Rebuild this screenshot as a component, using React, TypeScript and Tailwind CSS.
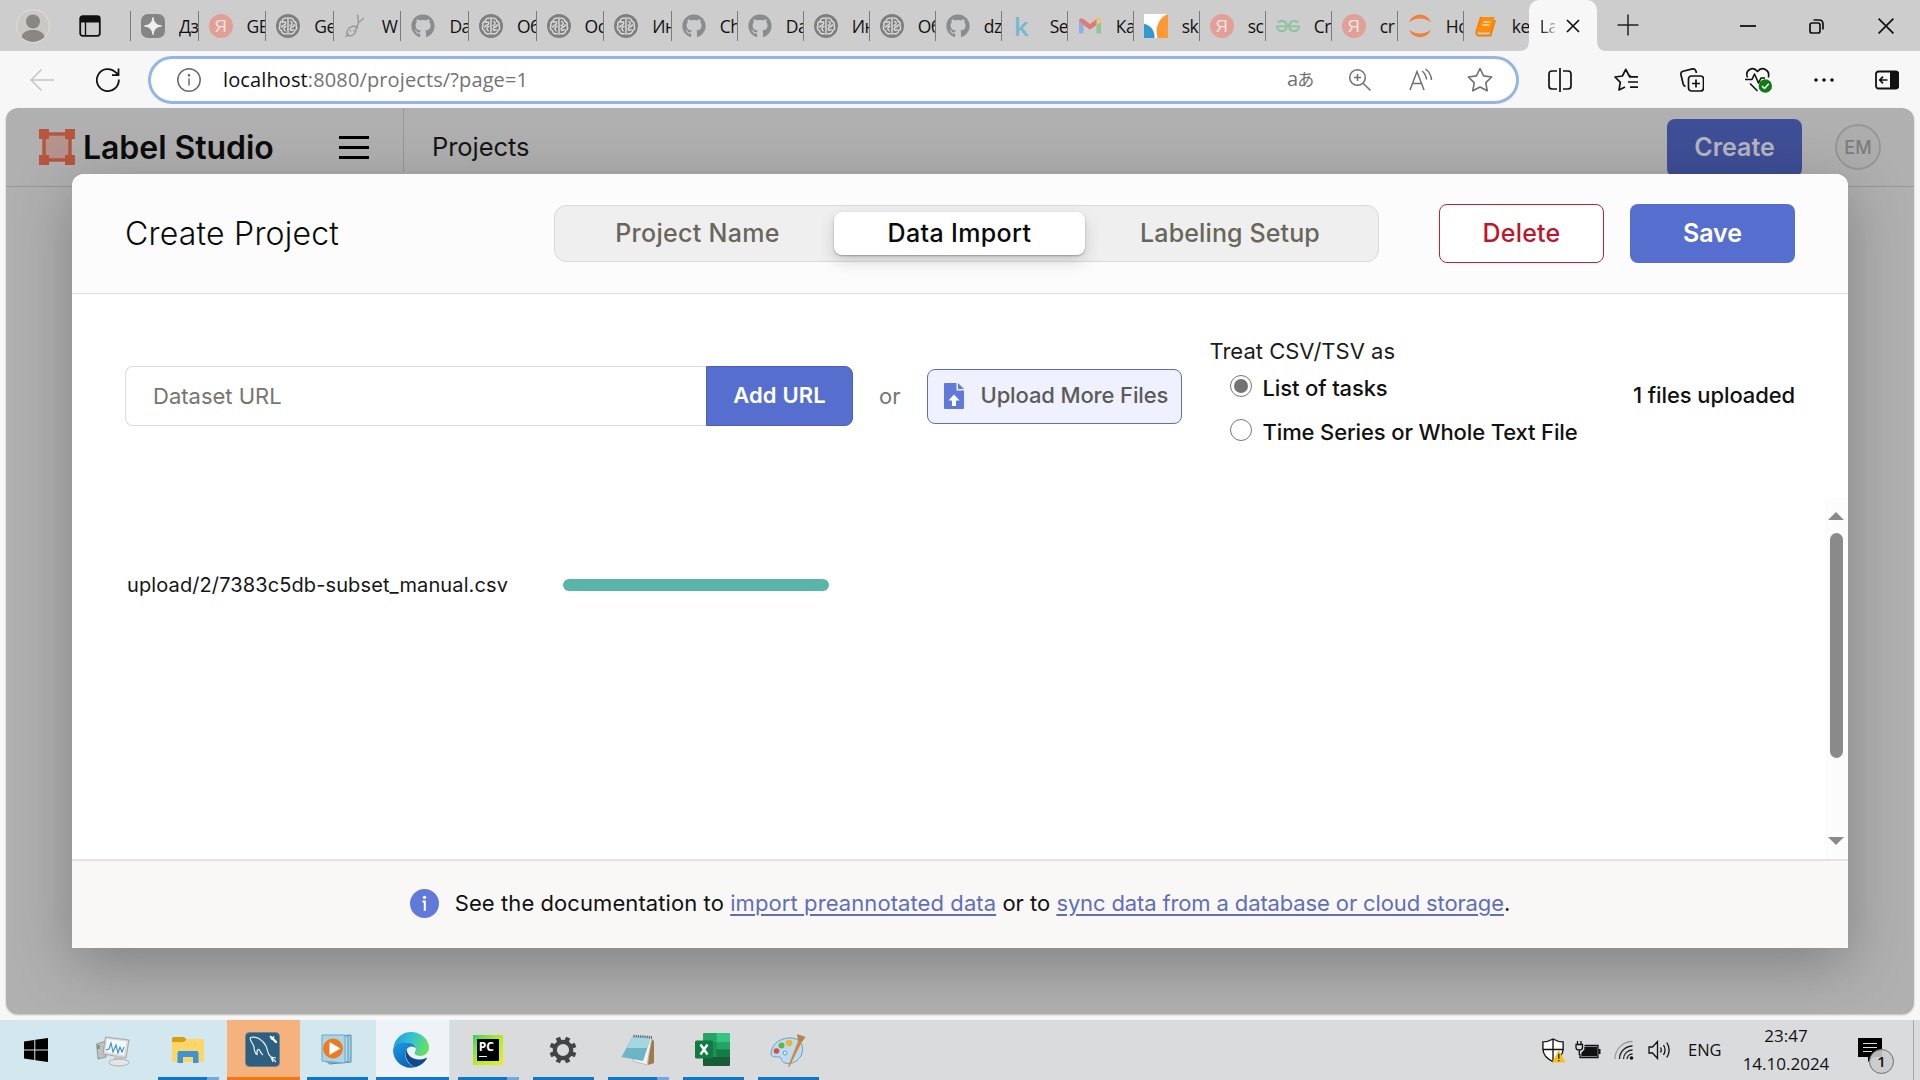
import type { ReactNode } from "react";
import { FaGithub } from "react-icons/fa";
import { SiGeeksforgeeks } from "react-icons/si";

/* ---------- tab favicons ---------- */

const Sparkle = () => (
  <svg viewBox="0 0 24 24" className="size-6">
    <rect width="24" height="24" rx="7" fill="#858585" />
    <path d="M12 3.5Q12.8 11.2 20.5 12Q12.8 12.8 12 20.5Q11.2 12.8 3.5 12Q11.2 11.2 12 3.5Z" fill="#efefef" stroke="#efefef" strokeWidth="1" />
  </svg>
);

const Yandex = () => (
  <div className="flex size-6 items-center justify-center rounded-full bg-[#e0a096] font-['Liberation_Sans'] text-[17px] leading-none text-[#f3e4e1]">
    Я
  </div>
);

const Brain = () => (
  <svg viewBox="0 0 24 24" className="size-6">
    <circle cx="12" cy="12" r="12" fill="#7f7f7f" />
    <g fill="none" stroke="#dedede" strokeWidth="1.4" strokeLinecap="round">
      <path d="M12 3.5V20.5M10.3 4.2C8 3.8 6.4 5 6.2 7C4.3 7.8 3.4 9.6 4 11.6C3 13.6 3.6 15.8 5.4 16.8C5.8 19 7.9 20.3 10.3 19.6" />
      <path d="M13.7 4.2C16 3.8 17.6 5 17.8 7C19.7 7.8 20.6 9.6 20 11.6C21 13.6 20.4 15.8 18.6 16.8C18.2 19 16.1 20.3 13.7 19.6" />
      <path d="M6.8 8.5C8.8 6.6 10.8 8.6 9 10.4C7.4 12 5.8 11.2 5.8 13.2M10 12.5C7.6 12.6 7 15.2 9.2 16.8" />
      <path d="M17.2 15.5C15.2 17.4 13.2 15.4 15 13.6C16.6 12 18.2 12.8 18.2 10.8M14 11.5C16.4 11.4 17 8.8 14.8 7.2" />
    </g>
  </svg>
);

const Needle = () => (
  <svg viewBox="0 0 24 24" className="size-6" fill="none" stroke="#969696" strokeWidth="1.4" strokeLinecap="round">
    <path d="M19.5 4.500L14.500 8.500L13.500 1M14.500 8.500L12.500 14C12 20 8 23 4.500 21.500C1.500 20 3 15.500 6 13.500C9 11.800 12 12 13.500 14M2 22.500L4 20M6.500 16.500V17M10 16.500V17" />
  </svg>
);

const GitHub = () => <FaGithub className="size-6 text-[#8a8c8e]" />;

const Kaggle = () => (
  <div className="flex h-6 w-6 items-center pl-0.5 font-['Open_Sans'] text-[26px] font-semibold leading-none text-[#74b9cf]">k</div>
);

const Gmail = () => (
  <svg viewBox="0 0 24 24" className="size-6">
    <path d="M1 6.5V19.5H5.5V11Z" fill="#8fb0e6" />
    <path d="M23 6.5V19.5H18.5V11Z" fill="#8cc79c" />
    <path d="M1 7C1 4.5 3.6 3.6 5.5 5L12 10L18.5 5C20.4 3.6 23 4.5 23 7L18.5 11L12 15.8L5.5 11Z" fill="#df7d74" />
    <path d="M18.5 5C20.4 3.6 23 4.5 23 7V8L18.5 11.2Z" fill="#eccb6b" />
  </svg>
);

const Sklearn = () => (
  <svg viewBox="0 0 24 24" className="size-6">
    <rect width="24" height="24" fill="#fff" />
    <path d="M0 10C7 11 11 17 10.5 24H0Z" fill="#3499cd" />
    <path d="M24 0V24H13.5C10.5 14 15 3 24 0Z" fill="#ff9933" />
  </svg>
);

const Geeks = () => <SiGeeksforgeeks className="size-6 text-[#8fc3a0]" />;

const Jupyter = () => (
  <svg viewBox="0 0 24 24" className="size-6" fill="#f0813a">
    <path d="M1 8.5C4.5-1.7 19.500-1.700 23 8.500C17 3.300 7 3.300 1 8.500Z" />
    <path d="M1 15.500C4.500 25.700 19.500 25.700 23 15.500C17 20.700 7 20.700 1 15.500Z" />
  </svg>
);

const Book = () => (
  <svg viewBox="0 0 24 24" className="size-6">
    <path d="M7 3H20.500L17 18.500H3.500Z" fill="#ff8c0a" />
    <path d="M7 3L2.500 17.500C2 20 3 21.500 5 21.500H16.500L21 6" fill="none" stroke="#f57f00" strokeWidth="2" />
    <path d="M9.500 8H16.500M8.500 11H15.500" stroke="#ffe0b8" strokeWidth="1.500" />
  </svg>
);

const wideTabs: [() => ReactNode, string][] = [
  [Sparkle, "Дз"],
  [Yandex, "GB"],
  [Brain, "Ge"],
  [Needle, "W"],
  [GitHub, "Da"],
  [Brain, "Об"],
  [Brain, "Ос"],
  [Brain, "Ин"],
];

const narrowTabs: [() => ReactNode, string][] = [
  [GitHub, "Ch"],
  [GitHub, "Da"],
  [Brain, "Ин"],
  [Brain, "Об"],
  [GitHub, "dz"],
  [Kaggle, "Se"],
  [Gmail, "Ка"],
  [Sklearn, "sk"],
  [Yandex, "sc"],
  [Geeks, "Cr"],
  [Yandex, "cr"],
  [Jupyter, "Ho"],
  [Book, "ke"],
];

const TabBody = ({ icon, label }: { icon: ReactNode; label: string }) => (
  <>
    <div className="ml-2.5 shrink-0">{icon}</div>
    <div className="ml-3.5 h-7 min-w-0 flex-1 overflow-hidden whitespace-nowrap text-[17.5px] leading-7 tracking-[-0.5px] text-[#111]">{label}</div>
  </>
);

function TabStrip() {
  return (
    <div className="flex h-[51px] bg-[#cdcdcd]">
      <div className="flex w-[130px] items-center pl-4">
        <svg viewBox="0 0 34 34" className="size-[34px]">
          <circle cx="17" cy="17" r="16.300" fill="#cbc9c5" stroke="#dcdad6" strokeWidth="1.200" />
          <circle cx="17" cy="12.500" r="7" fill="#8a8683" />
          <path d="M5.500 28C7 22.500 12 21 17 21S27 22.500 28.500 28A16 16 0 0 1 5.500 28Z" fill="#8a8683" />
        </svg>
        <svg viewBox="0 0 22 22" className="ml-[29px] size-[22px]">
          <rect x="1.200" y="1.200" width="19.600" height="19.600" rx="2.500" fill="none" stroke="#111" strokeWidth="1.800" />
          <path d="M1 3.500Q1 1 3.500 1H18.500Q21 1 21 3.500V7.500H1Z" fill="#111" />
          <path d="M6.500 7V21" stroke="#111" strokeWidth="1.400" />
        </svg>
      </div>
      {wideTabs.map(([Icon, label], i) => (
        <div key={i} className="mt-[11px] flex h-[30px] w-[67.6px] items-center border-l-[1.5px] border-[#7b7b7b]">
          <TabBody icon={<Icon />} label={label} />
        </div>
      ))}
      {narrowTabs.map(([Icon, label], i) => (
        <div key={i} className="mt-[11px] flex h-[30px] w-[66px] items-center border-l-[1.5px] border-[#7b7b7b]">
          <TabBody icon={<Icon />} label={label} />
        </div>
      ))}
      <div className="relative flex h-full w-[68px] items-center rounded-t-[10px] bg-[#f7f7f7] pl-[11px]">
        <svg viewBox="0 0 10 10" className="absolute -left-2.5 bottom-0 size-2.5"><path d="M10 0V10H0Q10 10 10 0Z" fill="#f7f7f7" /></svg>
        <svg viewBox="0 0 10 10" className="absolute -right-2.5 bottom-0 size-2.5"><path d="M0 0V10H10Q0 10 0 0Z" fill="#f7f7f7" /></svg>
        <div className="h-7 w-[15px] overflow-hidden bg-linear-to-r from-[#111] to-[#bdbdbd] bg-clip-text text-[17.5px] leading-7 tracking-[-0.5px] text-transparent">La</div>
        <svg viewBox="0 0 14 14" className="ml-[11px] size-3.5" stroke="#111" strokeWidth="1.700"><path d="M1 1L13 13M13 1L1 13" /></svg>
      </div>
      <svg viewBox="0 0 22 22" className="ml-5 mt-3.5 size-[22px]" stroke="#222" strokeWidth="1.500"><path d="M0.500 11H21.500M11 0.500V21.500" /></svg>
      <div className="ml-auto flex h-[51px] items-center gap-[53px] pr-[26px]">
        <svg viewBox="0 0 16 16" className="size-4" stroke="#111" strokeWidth="1.800"><path d="M0 8H16" /></svg>
        <svg viewBox="0 0 16 16" className="size-4" fill="none" stroke="#111" strokeWidth="1.700">
          <rect x="1" y="5" width="10" height="10" rx="2" />
          <path d="M4.500 2H10Q14 2 14 6V11.500" />
        </svg>
        <svg viewBox="0 0 16 16" className="size-4" stroke="#111" strokeWidth="1.700"><path d="M0.600 0.600L15.400 15.400M15.400 0.600L0.600 15.400" /></svg>
      </div>
    </div>
  );
}

/* ---------- address bar ---------- */

function Toolbar() {
  return (
    <div className="flex h-[57px] items-center bg-[#f7f7f7] font-['Open_Sans']">
      <svg viewBox="0 0 24 24" className="ml-[30px] size-6" fill="none" stroke="#c4c4c4" strokeWidth="1.500"><path d="M24 12H1M11.500 1.500L1 12L11.500 22.500" /></svg>
      <svg viewBox="0 0 24 24" className="ml-[42px] size-6" fill="none" stroke="#111" strokeWidth="1.800">
        <path d="M22.800 11.500A11 11 0 1 1 19.500 4.200L22.500 7M22.500 0.500V7.200H16" />
      </svg>
      <div className="ml-[28px] flex h-12 w-[1371px] items-center rounded-full border-[3px] border-[#97b4e6] bg-white text-[#707070]">
        <svg viewBox="0 0 24 24" className="ml-[26px] size-6" fill="none" stroke="#6a6a6a" strokeWidth="1.500">
          <circle cx="12" cy="12" r="11.200" />
          <path d="M12 10.500V17.500" />
          <circle cx="12" cy="7.300" r="0.600" fill="#6a6a6a" />
        </svg>
        <div className="ml-[22px] text-[20px] leading-7 tracking-[0.120px] text-[#737373]"><span className="text-[#111]">localhost</span>:8080/projects/?page=1</div>
        <div className="ml-auto flex items-center pr-[23px]">
          <div className="w-[26px] whitespace-nowrap font-['Open_Sans','Noto_Sans_CJK_JP',sans-serif] text-[17px] leading-6 tracking-[-1px]"><span className="text-[20px]">a</span>あ</div>
          <svg viewBox="0 0 24 24" className="ml-[35px] size-6" fill="none" stroke="#707070" strokeWidth="1.500"><circle cx="9.500" cy="9.500" r="7.800" /><path d="M15.200 15.200L22.500 22.500M9.500 6V13M6 9.500H13" /></svg>
          <svg viewBox="0 0 24 24" className="ml-[37px] size-6" fill="none" stroke="#707070" strokeWidth="1.500"><path d="M1 22L8 3.500L15 22M3.500 15.500H12.500M13 3Q17 6 17.500 11.500M16.500 1Q22 5 22.500 12" /></svg>
          <svg viewBox="0 0 26 26" className="ml-[34px] size-[26px]" fill="none" stroke="#707070" strokeWidth="1.600" strokeLinejoin="round"><path d="M13 1.500L16.600 8.900L24.700 10L18.800 15.700L20.200 23.800L13 20L5.800 23.800L7.200 15.700L1.300 10L9.400 8.900Z" /></svg>
        </div>
      </div>
      <svg viewBox="0 0 24 24" className="ml-[29px] size-6" fill="none" stroke="#111" strokeWidth="1.700"><path d="M9 3H4Q1 3 1 6V18Q1 21 4 21H9M15 3H20Q23 3 23 6V18Q23 21 20 21H15M12 0V24" /></svg>
      <svg viewBox="0 0 24 24" className="ml-[42px] size-6" fill="none" stroke="#111" strokeWidth="1.700" strokeLinejoin="round"><path d="M17 8L15.200 8L11.800 1.300L8.400 8L1 9L6.300 14.300L5 22L11 19M15 8.800H24M14 14H24M16 19.200H24" /></svg>
      <svg viewBox="0 0 24 24" className="ml-[42px] size-6" fill="none" stroke="#111" strokeWidth="1.700"><rect x="8.500" y="8" width="15" height="15" rx="3" /><path d="M16 11.500V19.500M12 15.500H20M5.500 18.500Q3.800 18 3.200 16L0.900 6.500Q0.500 4 3 3.300L12.500 0.900Q15 0.500 15.800 2.800L16.500 5" /></svg>
      <svg viewBox="0 0 27 26" className="ml-[41px] h-[26px] w-[27px]" fill="none" stroke="#111" strokeWidth="1.600" strokeLinejoin="round">
        <path d="M2.500 10.500C-0.500 3 8 -1.500 12.500 4.500C17 -1.500 25.500 3 23.300 10.500M0 12.500H7L9.500 7L13.500 16L16 11H20M5 16.500L12.500 24" />
        <circle cx="20.300" cy="19" r="6.700" fill="#127a12" stroke="none" /><path d="M17 19L19.500 21.500L23.800 16.700" stroke="#fff" />
      </svg>
      <svg viewBox="0 0 20 4" className="ml-[42px] h-1 w-5" fill="#111"><circle cx="2" cy="2" r="1.800" /><circle cx="10" cy="2" r="1.800" /><circle cx="18" cy="2" r="1.800" /></svg>
      <svg viewBox="0 0 24 20" className="ml-[41px] h-5 w-6"><rect x="1" y="1.500" width="22" height="17" rx="2.500" fill="none" stroke="#111" strokeWidth="1.800" /><path d="M15 1H21Q24 1 24 4V16Q24 19 21 19H15Z" fill="#111" /><path d="M12.500 10H5M8 6.700L4.800 10L8 13.300" fill="none" stroke="#111" strokeWidth="1.700" /></svg>
    </div>
  );
}

/* ---------- Label Studio ---------- */

function AppHeader() {
  return (
    <div className="flex h-[79px] items-center border-b border-[#969696] pb-[15px]">
      <div className="flex h-[64px] w-[398px] items-center border-r border-[#979797] pl-[33px]">
        <svg viewBox="0 0 36 36" className="mt-[15px] size-9">
          <rect x="5" y="5" width="26" height="26" fill="#b5948e" stroke="#b7553f" strokeWidth="3.500" />
          <g fill="#b7553f"><rect width="10" height="10" /><rect x="26" width="10" height="10" /><rect y="26" width="10" height="10" /><rect x="26" y="26" width="10" height="10" /></g>
        </svg>
        <div className="ml-2 mt-[17px] whitespace-nowrap text-[32px] font-semibold leading-10 tracking-[-0.050px] text-[#0c0c0c]">Label Studio</div>
        <div className="ml-auto mr-[34px] mt-4 flex w-[30px] flex-col gap-[7px]">
          <div className="h-[3px] bg-black" /><div className="h-[3px] bg-black" /><div className="h-[3px] bg-black" />
        </div>
      </div>
      <div className="ml-7 mt-[15px] text-[25.500px] tracking-[-0.050px] text-[#161616]">Projects</div>
      <div className="ml-auto mt-4 flex h-[58px] w-[135px] items-center justify-center rounded-lg bg-[#3f4f97] text-[25px] font-semibold text-[#b4b6bf]">Create</div>
      <div className="ml-[33px] mr-[33px] mt-[15px] flex size-[46px] items-center justify-center rounded-full border-2 border-[#979797] bg-[#adadad] text-[18px] font-medium text-[#7d7d7d]">EM</div>
    </div>
  );
}

const Radio = ({ on, label, tall }: { on?: boolean; label: string; tall: string }) => (
  <div className={"flex items-center pl-[21px] " + tall}>
    <div className="-mt-[5px] flex size-[22px] items-center justify-center rounded-full border-[1.5px] border-[#767676] bg-white">
      {on && <div className="size-[14px] rounded-full bg-[#737373]" />}
    </div>
    <div className="ml-2.5 whitespace-nowrap text-[22px] font-medium tracking-[-0.130px] text-[#111]">{label}</div>
  </div>
);

function Modal() {
  return (
    <div className="flex h-[774px] w-[1776px] flex-col overflow-hidden rounded-t-[12px] bg-white">
      <div className="flex h-[120px] items-center border-b border-[#dcdcdc] bg-[#fcfcfc] px-[53px] text-[25px]">
        <div className="w-[429px] text-[32px] font-light tracking-[0.220px] text-[#0a0a0a]">Create Project</div>
        <div className="flex h-[57px] w-[825px] items-center rounded-[12px] border border-[#dadada] bg-[#efefef] pl-1.5 pr-[3px] font-medium text-[#69665c]">
          <div className="w-[273px] text-center tracking-[0.300px]">Project Name</div>
          <div className="flex h-[43px] w-[251px] items-center justify-center rounded-lg bg-white tracking-[0.350px] text-[#0a0a0a] shadow-[0_1px_2px_rgba(0,0,0,0.3),0_6px_16px_rgba(0,0,0,0.16)]">Data Import</div>
          <div className="flex-1 text-center tracking-[0.120px]">Labeling Setup</div>
        </div>
        <div className="ml-[60px] flex h-[59px] w-[165px] items-center justify-center rounded-lg border border-[#b9243a] bg-white font-medium tracking-[0.200px] text-[#c0142a]">Delete</div>
        <div className="ml-[26px] flex h-[59px] w-[165px] items-center justify-center rounded-lg bg-[#566fcf] font-semibold tracking-[-0.100px] text-white">Save</div>
      </div>

      <div className="flex flex-1 flex-col pt-11">
        <div className="flex h-[116px] items-center px-[53px] text-[22px]">
          <div className="flex h-[60px] w-[728px]">
            <div className="flex flex-1 items-center rounded-l-lg border border-r-0 border-[#dddcd8] pl-[27px] text-[#77756f]">Dataset URL</div>
            <div className="flex w-[147px] items-center justify-center rounded-r-lg border border-[#4a60b8] bg-[#566fcf] pb-0.5 font-semibold tracking-[0.150px] text-white">Add URL</div>
          </div>
          <div className="ml-[26px] text-[#77756f]">or</div>
          <div className="ml-[27px] flex h-[55px] w-[255px] items-center rounded-lg border border-[#5a6fc0] bg-[#eff1ff] pl-4">
            <svg viewBox="0 0 20 26" className="h-[26px] w-5">
              <path d="M0 1Q0 0 1 0H12.500V7.500H20V25Q20 26 19 26H1Q0 26 0 25Z" fill="#617ada" />
              <path d="M14 0L20 6H14Z" fill="#617ada" />
              <path d="M10 11.500L15.500 17.500H12V23H8V17.500H4.500Z" fill="#fff" />
            </svg>
            <div className="ml-4 whitespace-nowrap pb-0.5 font-medium tracking-[-0.130px] text-[#5c5b58]">Upload More Files</div>
          </div>
          <div className="ml-[27px] flex h-[116px] flex-col">
            <div className="h-[27px] leading-[27px] text-[#1c1c1c]">Treat CSV/TSV as</div>
            <Radio on tall="h-[46px]" label="List of tasks" />
            <Radio tall="h-[43px]" label="Time Series or Whole Text File" />
          </div>
          <div className="ml-auto whitespace-nowrap pb-0.5 font-medium tracking-[-0.100px] text-[#111]">1 files uploaded</div>
        </div>

        <div className="mt-11 flex flex-1">
          <div className="flex flex-1 items-start pl-[55px] pt-[67px]">
            <div className="flex h-10 items-center">
              <div className="w-[436px] whitespace-nowrap text-[20px] tracking-[0.110px] text-[#161616]">upload/2/7383c5db-subset_manual.csv</div>
              <div className="h-3 w-[266px] rounded-full bg-[#5ab5a9]" />
            </div>
          </div>
          <div className="flex w-[23px] flex-col items-center bg-[#fcfcfc] pb-3.5 pr-px pt-3.5">
            <svg viewBox="0 0 16 8" className="h-2 w-4"><path d="M0 8L8 0L16 8Z" fill="#8a8a8a" /></svg>
            <div className="mt-[13px] h-[225px] w-[13px] rounded-full bg-[#8a8a8a]" />
            <svg viewBox="0 0 16 8" className="mt-auto h-2 w-4"><path d="M0 0L8 8L16 0Z" fill="#8a8a8a" /></svg>
          </div>
        </div>
      </div>

      <div className="flex h-[89px] items-center justify-center border-t-2 border-[#e4e4e2] bg-[#f9f8f6] pb-0.5 text-[22px] text-[#111]">
        <svg viewBox="0 0 28 28" className="mr-4 size-[29px]">
          <circle cx="14" cy="14" r="14" fill="#617ada" />
          <circle cx="14" cy="8" r="1.600" fill="#fff" />
          <path d="M12 12H14.300V21" fill="none" stroke="#fff" strokeWidth="2" />
        </svg>
        <div className="whitespace-nowrap">
          <span className="tracking-[0.080px]">See the documentation to </span>
          <span className="tracking-[0.090px] text-[#5f6fb8] underline decoration-2 underline-offset-[3px]">import preannotated data</span> or to{" "}
          <span className="tracking-[-0.130px] text-[#5f6fb8] underline decoration-2 underline-offset-[3px]">sync data from a database or cloud storage</span>.
        </div>
      </div>
    </div>
  );
}

/* ---------- taskbar ---------- */

const Task = ({ children, tile = "", bar }: { children: ReactNode; tile?: string; bar?: ReactNode }) => (
  <div className="flex h-[60px] w-[75px] flex-col">
    <div className={"flex h-[60px] w-[73px] flex-col items-center " + tile}>
      <div className="flex h-[57px] items-center justify-center pr-[1.5px] pt-0.5">{children}</div>
      {bar}
    </div>
  </div>
);

const Bar = () => <div className="h-[3px] w-[61px] bg-[#1076cb]" />;
const SplitBar = () => (
  <div className="flex h-[3px] w-[61px]">
    <div className="w-[49px] bg-[#1076cb]" />
    <div className="flex-1 bg-[#70aadf]" />
  </div>
);

function Taskbar() {
  return (
    <div className="flex h-[60px] bg-[#d9dbdd] font-['Open_Sans']">
      <div className="flex h-[60px] w-[450px] bg-[#d2e7ee]">
        <div className="flex w-[72px] shrink-0 items-center justify-center">
          <svg viewBox="0 0 24 24" className="size-6"><path d="M0 3.400L10.300 2V11.500H0ZM11.300 1.800L24 0V11.500H11.300ZM0 12.500H10.300V22L0 20.600ZM11.300 12.500H24V24L11.300 22.200Z" fill="#000" /></svg>
        </div>
        <div className="flex w-[80px] shrink-0 items-center justify-center pl-0.5 pt-0.5">
          <svg viewBox="0 0 34 31" className="h-[31px] w-[34px]">
            <path d="M0.500 8L10 5V21L2 23Z" fill="#bfc1c3" stroke="#888" strokeWidth="0.800" /><rect x="1.500" y="9" width="2" height="4" fill="#49a043" />
            <path d="M9.500 1L33 4L30 22L7 18Z" fill="#d9dbdd" stroke="#999" strokeWidth="0.800" /><path d="M11 3L30.500 5.500L28 19.500L9.500 16Z" fill="#f4f8fb" />
            <path d="M10 14L13 13L15 7L17 16L20 9L22 17L24 11L26 16L28 11" fill="none" stroke="#3b8bc8" strokeWidth="1.100" />
            <path d="M18 20H26L27 25H18Z" fill="#c4c6c8" /><ellipse cx="23" cy="26.500" rx="10" ry="3.500" fill="#e4e5e6" stroke="#a3a5a7" strokeWidth="0.800" />
          </svg>
        </div>
        <div className="flex w-[298px] shrink-0">
          <Task bar={<SplitBar />}>
            <svg viewBox="0 0 32 26" className="h-[26px] w-8">
              <path d="M0 1.500Q0 0 1.500 0H12L15 3V8H0Z" fill="#d79b15" /><path d="M0 5H12L15 2H30.500Q32 2 32 3.500V23.500Q32 25 30.500 25H1.500Q0 25 0 23.500Z" fill="#fcd667" />
              <path d="M5.500 26V16Q5.500 14 7.500 14H24.500Q26.500 14 26.500 16V26H21V20H11V26Z" fill="#3c93d6" />
            </svg>
          </Task>
          <Task tile="bg-[#f6b27c]" bar={<div className="h-[3px] w-[73px] bg-[#f37514]" />}>
            <svg viewBox="0 0 35 35" className="size-[35px]">
              <rect x="0.500" y="0.500" width="34" height="34" rx="4" fill="#2c5f80" stroke="#71838a" />
              <path d="M5.500 5.500C12 4 18 8 21 14C23 18 22 22 26 25L31 30M31 26L26 25L28 30M5.500 5.500C4 8 8 11 9 15C9.500 19 9 21 12 22.500C12 19 12 17 14 17.500C15.500 20 16.500 22 18 23" fill="none" stroke="#e8f1f5" strokeWidth="1.200" />
              <path d="M26.500 5.500L31 10" fill="none" stroke="#fff" strokeWidth="2.400" strokeLinecap="round" />
              <path d="M25 4L27 7L29 4.500" fill="none" stroke="#fff" strokeWidth="1.500" />
            </svg>
          </Task>
          <Task bar={<Bar />}>
            <svg viewBox="0 0 31 31" className="size-[31px]">
              <path d="M8 3L30 1V28L8 30Z" fill="#a4cfe4" stroke="#4c8fb0" /><path d="M5 2H27V28H5Z" fill="#b5dbeb" stroke="#5b9bba" /><path d="M1 1H24V29L1 27Z" fill="#abd5e7" stroke="#6ba9c4" />
              <circle cx="12" cy="14.500" r="10" fill="#ef7a22" /><path d="M8.500 8V21L19.500 14.500Z" fill="#fff" />
            </svg>
          </Task>
          <Task tile="bg-[#edf3f6]" bar={<div className="h-[3px] w-[73px] bg-[#1076cb]" />}>
            <svg viewBox="0 0 36 36" className="size-9">
              <defs>
                <linearGradient id="edgeTop" x1="0" x2="1" y1="0.200" y2="0.500"><stop offset="0" stopColor="#1f9be0" /><stop offset="0.500" stopColor="#35c4cf" /><stop offset="1" stopColor="#66e060" /></linearGradient>
                <linearGradient id="edgeLow" x1="0" x2="0.600" y1="0" y2="1"><stop offset="0" stopColor="#1b9de2" /><stop offset="1" stopColor="#0f62b8" /></linearGradient>
              </defs>
              <path d="M0.500 15.500C2 6 9.500 0 18 0C28 0 36 7.500 36 15.500C36 21 31.500 24 27.500 24C23.500 24 21.500 22.500 21.500 21C21.500 19.800 23 19 23 16.500C22.500 13 18 10.500 13 10.500C7 10.500 2.500 12.500 0.500 15.500Z" fill="url(#edgeTop)" />
              <path d="M0 18C0.500 13 6 9.800 12 10.200C18 10.300 22.500 13 23 16.500C20.500 13 14 14 12.500 20C11 28 17 34 23 35C11 38.500 0 29.500 0 18Z" fill="url(#edgeLow)" />
              <path d="M12.700 19C11 26 17 34.500 23 35C28 33.500 32 30 33.800 26.500C34 25.800 33.500 25.600 33 25.900C25 29.500 15 27 13.500 17.500Z" fill="#114a8b" />
            </svg>
          </Task>
        </div>
      </div>
      <div className="ml-0.5 flex">
        <Task bar={<SplitBar />}>
          <div className="size-[30px] bg-linear-to-br from-[#20d060] via-[#b8ea20] to-[#e8ee20] p-1">
            <div className="flex h-full flex-col bg-black pl-[2px] pt-[1px] text-[12px] font-bold leading-[13px] text-white">PC<div className="mt-[3px] h-px w-2 bg-white" /></div>
          </div>
        </Task>
        <Task bar={<Bar />}>
          <svg viewBox="0 0 28 28" className="size-7">
            <circle cx="14" cy="14" r="8.200" fill="none" stroke="#434446" strokeWidth="4.200" />
            <g stroke="#434446" strokeWidth="4.600">
              <path d="M14 0.500V5M14 23V27.500M0.500 14H5M23 14H27.500" transform="rotate(22.500 14 14)" />
              <path d="M14 0.500V5M14 23V27.500M0.500 14H5M23 14H27.500" transform="rotate(67.500 14 14)" />
            </g>
          </svg>
        </Task>
        <Task bar={<SplitBar />}>
          <svg viewBox="0 0 34 32" className="h-8 w-[34px]">
            <path d="M29 4L33 7V29L27 31Z" fill="#a07b48" /><path d="M13 3L31 4L26 31L12 27Z" fill="#f0f2f3" stroke="#aaa" strokeWidth="0.700" />
            <path d="M12 2L30 3L22 27L0.500 23Z" fill="#6cb5c4" /><path d="M12 2L30 3L26 14L6 14Z" fill="#a5d7e0" />
            <path d="M12.500 2L31 3.300" stroke="#666" strokeWidth="2.500" strokeDasharray="1.200 1" />
          </svg>
        </Task>
        <Task bar={<Bar />}>
          <svg viewBox="0 0 35 33" className="h-[33px] w-[35px]">
            <rect x="8" width="27" height="33" rx="1.500" fill="#1f8f57" /><path d="M8 1.500Q8 0 9.500 0H21.500V9H8Z" fill="#27a366" /><path d="M21.500 0H33.500Q35 0 35 1.500V9H21.500Z" fill="#35c481" />
            <path d="M21.500 9H35V16.500H21.500Z" fill="#23a366" /><path d="M21.500 16.500H35V24H21.500Z" fill="#127c42" /><path d="M8 24H35V31.500Q35 33 33.500 33H9.500Q8 33 8 31.500Z" fill="#185c37" />
            <rect y="7.500" width="18" height="18" rx="1.500" fill="#107c41" /><path d="M5.500 11.500L12.500 21.500M12.500 11.500L5.500 21.500" stroke="#fff" strokeWidth="2.400" />
          </svg>
        </Task>
        <Task bar={<Bar />}>
          <svg viewBox="0 0 36 34" className="h-[34px] w-9">
            <path d="M1 20C2 10 12 4 22 5C31 6 34 13 32 20C30 28 21 32 15 30C10 28.500 13 24.500 9 24C5 23.500 1 25 1 20Z" fill="#bcdcf0" stroke="#6d9cc0" />
            <circle cx="6.500" cy="18" r="2.800" fill="#e04a3f" /><circle cx="11.500" cy="12.500" r="3" fill="#5db648" /><circle cx="19" cy="10" r="3.200" fill="#f2b230" /><circle cx="15" cy="20" r="2" fill="#e4eaee" stroke="#6d9cc0" />
            <path d="M18 33.500L28.500 7L32 8.500L19.500 33.500Z" fill="#d98436" /><path d="M27 1L35.500 4L32 9L28 7.500Z" fill="#b58252" />
          </svg>
        </Task>
      </div>

      <div className="ml-auto flex h-[60px] items-center text-[#111]">
        <svg viewBox="0 0 25 26" className="size-[25px]">
          <path d="M12 1Q17 4 22.500 4V12Q22 20 12 24.500Q2 20 1.500 12V4Q7 4 12 1Z" fill="#fff" stroke="#111" strokeWidth="1.400" /><path d="M12 1V24.500M1.500 12H22.500" stroke="#111" strokeWidth="1.400" />
          <path d="M18 12.500L25 25.500H11Z" fill="#fcbf16" /><path d="M18 16.500V21.500M18 22.800V24.200" stroke="#111" strokeWidth="1.300" />
        </svg>
        <svg viewBox="0 0 26 20" className="ml-[9px] h-5 w-[26px]" fill="none" stroke="#111" strokeWidth="1.300">
          <path d="M9.500 5.500H23V17.500H5V14" /><path d="M10 7.500H21.500V15.500H7V13L10 10Z" fill="#111" /><path d="M24.500 9V14" strokeWidth="2" /><path d="M2.500 1V4M6 1V4M1 4.500H7.500V7.500Q7.500 10 4.300 10Q1 10 1 7.500ZM4.300 10V15" />
        </svg>
        <svg viewBox="0 0 20 20" className="ml-[13px] size-5" fill="none" strokeWidth="1.300">
          <path d="M1 19A17.500 17.500 0 0 1 18.500 1.500" stroke="#9a9a9a" /><path d="M5.500 19A13 13 0 0 1 18.500 6M9.500 19A9 9 0 0 1 18.500 10M13 19A5.500 5.500 0 0 1 18.500 14" stroke="#222" /><circle cx="17.500" cy="18" r="1.800" fill="#111" />
        </svg>
        <svg viewBox="0 0 24 20" className="ml-[14px] h-5 w-6" fill="none" stroke="#111" strokeWidth="1.300"><path d="M1 7H4.500L9.500 1.500V18.500L4.500 13H1ZM12.500 7.500Q14 10 12.500 12.500M15.500 5Q18.500 10 15.500 15M18.800 2.500Q23.500 10 18.800 17.500" /></svg>
        <div className="ml-4 w-[34px] whitespace-nowrap text-[16.500px]">ENG</div>
        <div className="ml-[20px] flex w-[88px] flex-col items-center text-[17px] leading-7"><div>23:47</div><div>14.10.2024</div></div>
        <div className="relative ml-[28px] h-[60px] w-[55px]">
          <svg viewBox="0 0 24 24" className="mt-[18px] size-6"><path d="M0 0H24V19H15L10 24V19H0Z" fill="#000" /><path d="M5 5.500H19M5 9.500H19M5 13.500H14" stroke="#ddd" strokeWidth="1.200" /></svg>
          <div className="absolute left-[11px] top-[29px] flex size-[25px] items-center justify-center rounded-full border border-[#707070] bg-[#c9cbcd]/90 text-[15px] font-semibold leading-none">1</div>
        </div>
        <div className="mr-1.5 h-[60px] w-px bg-[#a5a7a8]" />
      </div>
    </div>
  );
}

export default function App() {
  return (
    <div className="flex h-[1080px] w-[1920px] flex-col overflow-hidden bg-[#f7f7f7] font-['Open_Sans',sans-serif]">
      <TabStrip />
      <Toolbar />
      <div className="relative mx-1.5 mb-1.5 flex-1 overflow-hidden rounded-[12px] bg-[#b0b0b0] font-['Inter',sans-serif] shadow-[0_1px_2px_rgba(0,0,0,0.25)]">
        <AppHeader />
        <div className="absolute inset-0 flex items-start justify-center pt-[66px]">
          <div className="rounded-t-[12px] shadow-[0_16px_60px_rgba(0,0,0,0.27)]">
            <Modal />
          </div>
        </div>
      </div>
      <Taskbar />
    </div>
  );
}
